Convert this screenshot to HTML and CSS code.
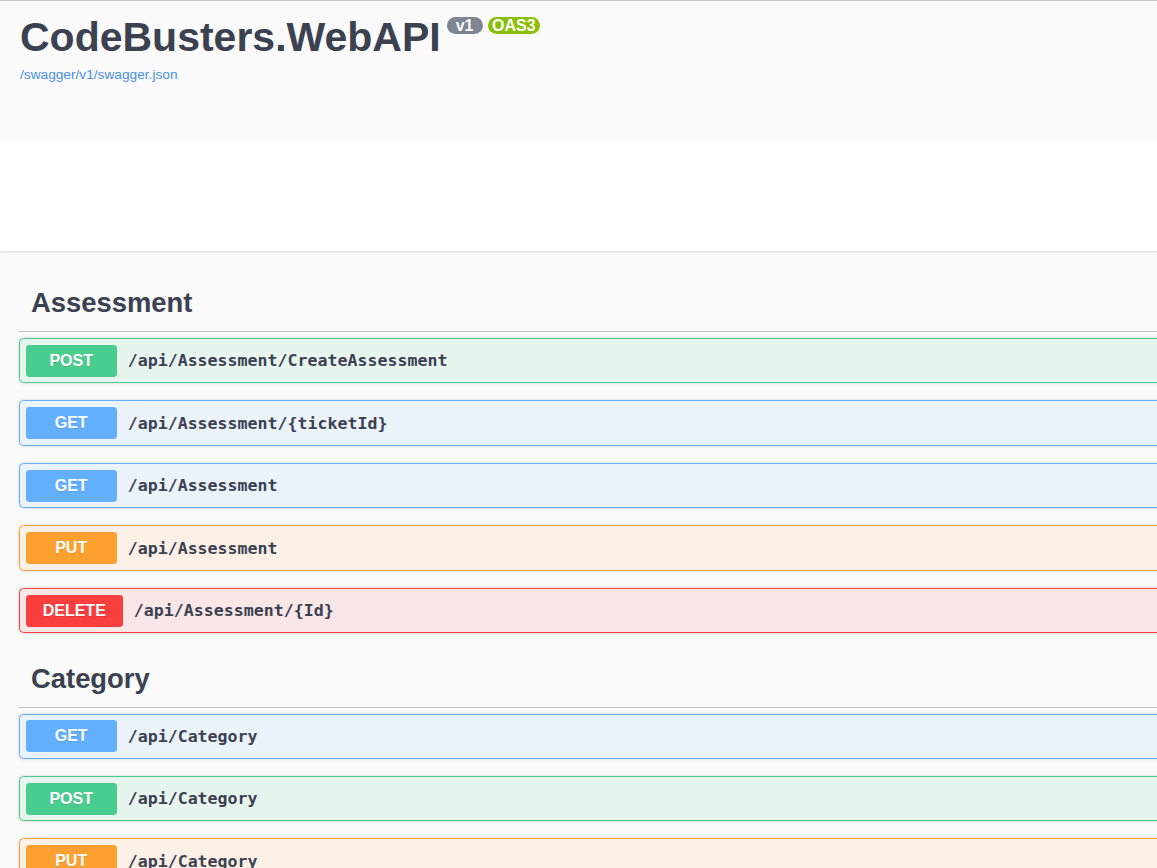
FILE: index.html
```html
<!DOCTYPE html>
<html lang="en">
<head>
<meta charset="utf-8">
<title>Swagger UI</title>
<link rel="stylesheet" href="styles.css">
</head>
<body>
<div class="page">
  <header class="info">
    <div class="title-row">
      <h2 class="title">CodeBusters.WebAPI</h2>
      <span class="badge badge-version">v1</span>
      <span class="badge badge-oas">OAS3</span>
    </div>
    <a class="spec-link" href="#">/swagger/v1/swagger.json</a>
  </header>
  <div class="scheme"></div>
  <main class="ops">
    <section class="tag-section">
      <h3 class="tag">Assessment</h3>
      <div class="opblock post"><span class="method">POST</span><span class="path">/api/Assessment/CreateAssessment</span></div>
      <div class="opblock get"><span class="method">GET</span><span class="path">/api/Assessment/{ticketId}</span></div>
      <div class="opblock get"><span class="method">GET</span><span class="path">/api/Assessment</span></div>
      <div class="opblock put"><span class="method">PUT</span><span class="path">/api/Assessment</span></div>
      <div class="opblock delete"><span class="method">DELETE</span><span class="path">/api/Assessment/{Id}</span></div>
    </section>
    <section class="tag-section">
      <h3 class="tag">Category</h3>
      <div class="opblock get"><span class="method">GET</span><span class="path">/api/Category</span></div>
      <div class="opblock post"><span class="method">POST</span><span class="path">/api/Category</span></div>
      <div class="opblock put"><span class="method">PUT</span><span class="path">/api/Category</span></div>
    </section>
  </main>
</div>
</body>
</html>
```
FILE: styles.css
```css
html, body {
  margin: 0;
  padding: 0;
}
html {
  overflow: hidden;
}
body {
  background: #fafafa;
  font-family: "Liberation Sans", Arial, sans-serif;
  color: #3b4151;
}
.page {
  border-top: 1px solid #c4c4c4;
}
.info {
  box-sizing: border-box;
  height: 140px;
  padding: 13px 20px 0;
  background: #fafafa;
}
.title-row {
  display: flex;
  align-items: flex-start;
}
.title {
  margin: 0;
  font-size: 41px;
  line-height: 46px;
  font-weight: 700;
  color: #3b4151;
}
.badge {
  margin-top: 3px;
  height: 17px;
  line-height: 17px;
  font-size: 16px;
  font-weight: 700;
  color: #fff;
  border-radius: 57px;
}
.badge-version {
  margin-left: 6px;
  padding: 0 9px;
  background: #7d8492;
}
.badge-oas {
  margin-left: 5px;
  padding: 0 4.5px;
  background: #89bf04;
}
.spec-link {
  display: inline-block;
  margin-top: 7px;
  font-size: 13.7px;
  line-height: 16px;
  color: #4990e2;
  text-decoration: none;
}
.scheme {
  height: 110px;
  background: #fff;
  box-shadow: 0 1px 2px 0 rgba(0, 0, 0, .15);
  margin-bottom: 23.8px;
}
.ops {
  width: 1400px;
  padding-left: 19px;
}
.tag {
  margin: 0 0 6px;
  padding: 11.4px 0 11.4px 12px;
  font-size: 27.4px;
  line-height: 33.4px;
  font-weight: 700;
  color: #3b4151;
  border-bottom: 1px solid rgba(59, 65, 81, .3);
}
.opblock {
  display: flex;
  align-items: center;
  padding: 5.7px;
  margin-bottom: 17.1px;
  border: 1px solid;
  border-radius: 4.5px;
  box-shadow: 0 0 3px rgba(0, 0, 0, .19);
}
.method {
  box-sizing: border-box;
  min-width: 91px;
  padding: 7px 17px;
  line-height: 18px;
  font-size: 16px;
  font-weight: 700;
  color: #fff;
  text-align: center;
  border-radius: 3.4px;
  text-shadow: 0 1px 0 rgba(0, 0, 0, .1);
}
.path {
  padding: 0 11px;
  font-family: "DejaVu Sans Mono", "Liberation Mono", monospace;
  font-size: 16.6px;
  font-weight: 700;
  color: #3b4151;
}
.post {
  border-color: #49cc90;
  background: rgba(73, 204, 144, .1);
}
.post .method {
  background: #49cc90;
}
.get {
  border-color: #61affe;
  background: rgba(97, 175, 254, .1);
}
.get .method {
  background: #61affe;
}
.put {
  border-color: #fca130;
  background: rgba(252, 161, 48, .1);
}
.put .method {
  background: #fca130;
}
.delete {
  border-color: #f93e3e;
  background: rgba(249, 62, 62, .1);
}
.delete .method {
  background: #f93e3e;
}
```
